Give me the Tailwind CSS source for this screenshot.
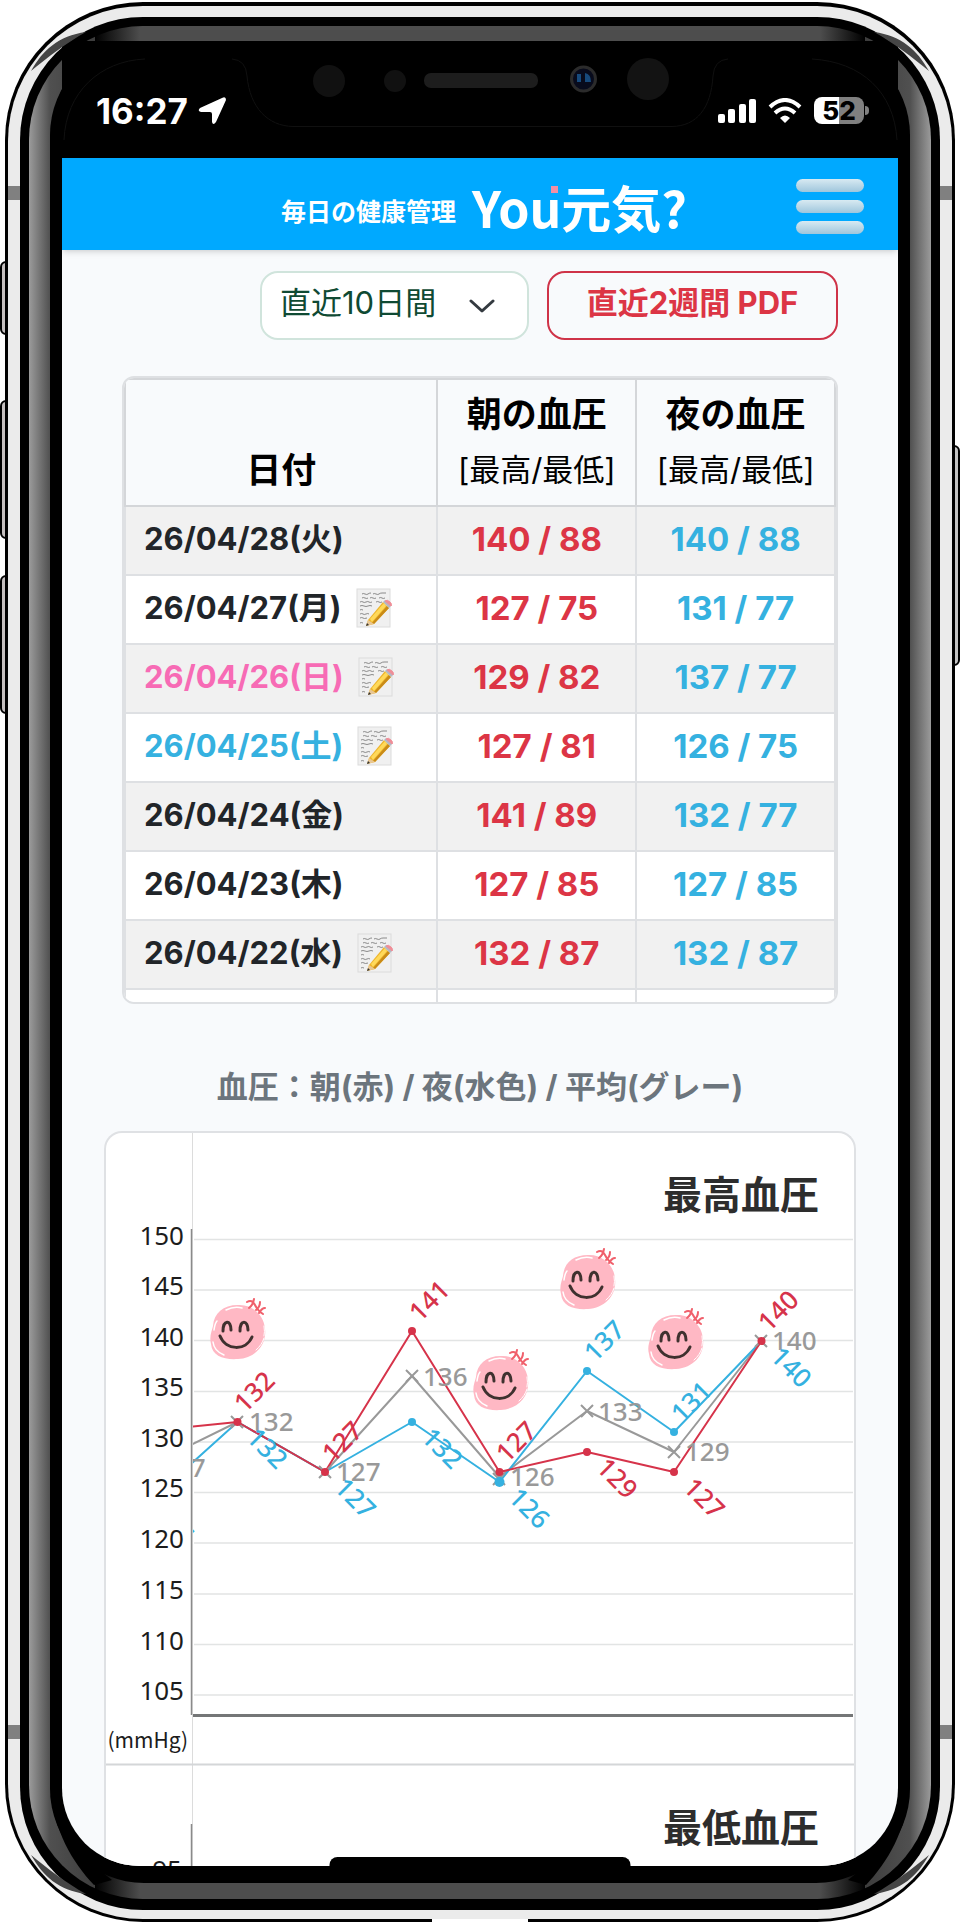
<!DOCTYPE html>
<html lang="ja">
<head>
    <meta charset="UTF-8">
    <meta name="viewport" content="width=device-width, initial-scale=1.0">
    <title>You元気?</title>
    <script src="https://cdn.jsdelivr.net/npm/@tailwindcss/browser@4"></script>
</head>
<body class="bg-white font-['Inter','Noto_Sans_CJK_JP',sans-serif]">
    <!-- Shared shapes -->
    <svg class="hidden">
        <symbol id="corner" viewBox="0 0 150 150">
            <path d="M31 71C43 50 58 36 86 32C66 43 47 58 31 71z" fill="#454545"/>
            <path d="M50 136C54 96 72 64 94 41L112 46L97 58C72 76 54 104 50 136z" fill="#000"/>
        </symbol>
        <symbol id="memo" viewBox="0 0 36 40">
            <rect x="1" y="1" width="33" height="38" fill="#f0f0f0" stroke="#dcdcdc"/>
            <g fill="none" stroke="#8a8a8a" stroke-width="1">
                <path d="M6 6q1-1 3 0t3 0t3-1M17 6q1-1 3 0t3 0t3-1t4 0"/>
                <path d="M6 10q1-1 3 0t3 0M14 10q1-1 3 0t3 0M23 10q2-1 3 0t3 0"/>
                <path d="M4 14q2-1 3 0t3 0t3 0t3 0M20 14q2-1 3 0t3 0"/>
                <path d="M4 18q2-1 4 0t4 0t4 0"/>
                <path d="M4 22q1-1 3 0M4 26q2-1 3 0t3 0t3 0M4 30q2-1 3 0t4 0M4 35q1-1 3 0"/>
            </g>
            <path d="M12 32L27 14L33 20L18 36L10 38z" fill="#eeb52c"/>
            <path d="M14 31L28 15L30 18L16 34z" fill="#ffd95a"/>
            <path d="M18 36L33 20L31 18L16 35z" fill="#c98b17"/>
            <path d="M12 32L18 36L10 38z" fill="#e8c795"/>
            <path d="M11 35L13 37L10 38z" fill="#333"/>
            <path d="M27 14L29 12L35 18L33 20z" fill="#b4b9c4"/>
            <path d="M29 13q2-2 5 1t1 4z" fill="#ef8e98" stroke="#ef8e98"/>
        </symbol>
        <symbol id="face" viewBox="0 0 60 66">
            <path d="M29 9C42 8 55 18 56 33C58 49 46 62 29 63C15 64 3 60 2 48C0 40 3 35 4 30C5 17 14 9 29 9z" fill="#ffb8c4"/>
            <g fill="none" stroke="#fff" stroke-linecap="round">
                <path d="M17 14q8-4 16-2M5 34q1-7 3-9M4 46q1 9 11 13" stroke-width="1.500"/>
                <path d="M55 42q-2 7-8 12M55 30q1 6 0 10" stroke-width="1"/>
            </g>
            <g fill="none" stroke="#3f312f" stroke-linecap="round">
                <path d="M14 35C14 24 22 23 22 34M31 35C31 23 39 24 39 34" stroke-width="3"/>
                <path d="M11 40C17 55 37 55 43 41" stroke-width="3"/>
            </g>
            <path d="M38 6q5-3 8 3t8 9M45 3q-1 6-5 9M51 6q0 5-4 8M56 12q-3 0-6 5" fill="none" stroke="#f0606c" stroke-width="2" stroke-linecap="round"/>
        </symbol>
        <symbol id="cross" viewBox="-7 -7 14 14">
            <path d="M-6 -6L6 6M6 -6L-6 6" stroke="#999" stroke-width="2"/>
        </symbol>
    </svg>

    <div class="relative px-[5px] pt-[2px] pb-1">
        <!-- Side buttons -->
        <div class="absolute left-0 top-[261px] h-[74px] w-3 rounded-l-md border-2 border-black bg-[#c4bfbf]"></div>
        <div class="absolute left-0 top-[400px] h-[139px] w-3 rounded-l-md border-2 border-black bg-[#c4bfbf]"></div>
        <div class="absolute left-0 top-[575px] h-[139px] w-3 rounded-l-md border-2 border-black bg-[#c4bfbf]"></div>
        <div class="absolute right-0 top-[445px] h-[221px] w-3 rounded-r-md border-2 border-black bg-[#c4c4c4]"></div>

        <!-- Phone body, ring by ring -->
        <div class="relative rounded-[138px] bg-black px-[3px] pt-1 pb-[3px]">
            <div class="rounded-[135px] bg-[#ebebeb] px-3 pt-[11px] pb-[9px]">
                <div class="rounded-[123px] bg-black px-[9px] pt-[9px] pb-[11px]">
                    <div class="rounded-[114px] bg-[linear-gradient(90deg,#9b9b9b_0,#505050_21px,#3d3d3d_66px,#000_66px,#4d4d4d_111px,#4d4d4d_calc(100%-111px),#000_calc(100%-66px),#3d3d3d_calc(100%-66px),#505050_calc(100%-21px),#9b9b9b_100%)] px-[21px] pt-[15px] pb-4">
                        <div class="rounded-[94px] bg-black px-3 pb-[17px]">
                            <div class="relative overflow-hidden rounded-b-[78px] bg-[#f8fafc]">

                                <!-- Status bar -->
                                <div class="relative flex h-[117px] items-center justify-between bg-black pt-[22px] pr-[29px] pl-[34px] text-white">
                                    <svg class="absolute top-0 left-1/2 -translate-x-1/2" width="836" height="117" viewBox="62 41 836 117">
                                        <path d="M64 140C66 92 100 61 145 59M232 59Q246 60 247 76C250 108 268 126 293 126.500H672C697 126 711 108 713 76Q714 60 728 59M812 59C862 62 894 92 897 140" fill="none" stroke="#101010"/>
                                        <circle cx="329" cy="81" r="16" fill="#111"/>
                                        <circle cx="395" cy="81" r="11" fill="#111"/>
                                        <rect x="424" y="73" width="114" height="15" rx="7" fill="#1d1d1d"/>
                                        <circle cx="583.500" cy="79" r="12" fill="#080b1c" stroke="#2b2b2b" stroke-width="3"/>
                                        <path d="M577 74h4v8h-4zM585 73q6 1 6 9h-6z" fill="#174a7c"/>
                                        <circle cx="648" cy="79" r="21" fill="#131313"/>
                                    </svg>
                                    <div class="relative flex items-center gap-[10px]">
                                        <span class="text-[35px] leading-8 font-bold">16:27</span>
                                        <svg width="28" height="28" viewBox="0 0 28 28" fill="#fff"><path d="M24 1Q28 -1 28 3L18 25Q15 29 14 25V17Q14 15 12 15H3Q-1 14 2 11z"/></svg>
                                    </div>
                                    <div class="relative flex items-center gap-3">
                                        <svg width="38" height="24" viewBox="0 0 38 24" fill="#fff">
                                            <rect y="15" width="7" height="9" rx="2"/><rect x="10" y="10" width="7" height="14" rx="2"/><rect x="21" y="5" width="7" height="19" rx="2"/><rect x="31" width="7" height="24" rx="2"/>
                                        </svg>
                                        <svg width="34" height="25" viewBox="0 0 34 25" fill="none" stroke="#fff" stroke-width="4">
                                            <path d="M2 9Q17 -5 32 9M7 15Q17 6 27 15"/><path d="M12 20Q17 15 22 20L17 25z" fill="#fff" stroke="none"/>
                                        </svg>
                                        <div class="flex items-center gap-px">
                                            <div class="flex h-[27px] w-[50px] items-center justify-center rounded-lg bg-[linear-gradient(90deg,#fff_50%,#808080_50%)] text-[26px] leading-none font-extrabold text-black">52</div>
                                            <div class="h-[9px] w-1 rounded-r-full bg-[#808080]"></div>
                                        </div>
                                    </div>
                                </div>

                                <!-- App header -->
                                <header class="relative flex h-[92px] items-center justify-center bg-[#00a9ff] font-['Noto_Sans_CJK_JP',sans-serif] font-bold text-white shadow-md">
                                    <a href="#" class="ml-2 flex items-center gap-4">
                                        <span class="pt-3 text-[25px] leading-8">毎日の健康管理</span>
                                        <span class="relative pt-1 text-[50px] leading-[60px]">You元気?<span class="absolute top-[14px] left-[79px] size-[7px] bg-[#f48fa4]"></span></span>
                                    </a>
                                    <button type="button" aria-label="メニュー" class="absolute right-[34px] flex flex-col gap-2 pt-1">
                                        <span class="h-[13px] w-[68px] rounded-full bg-linear-to-b from-[#d8eaf2] to-[#9fc6dc]"></span>
                                        <span class="h-[13px] w-[68px] rounded-full bg-linear-to-b from-[#d8eaf2] to-[#9fc6dc]"></span>
                                        <span class="h-[13px] w-[68px] rounded-full bg-linear-to-b from-[#d8eaf2] to-[#9fc6dc]"></span>
                                    </button>
                                </header>

                                <main>
                                    <div class="flex justify-end gap-[18px] px-[60px] pt-[21px] text-[31px]">
                                        <div class="relative">
                                            <select aria-label="表示期間" class="h-[69px] w-[269px] appearance-none rounded-[18px] border-2 border-[#d0e4dc] bg-white pb-1 pl-[18px] text-[#0f4a33]">
                                                <option>直近10日間</option>
                                            </select>
                                            <svg class="pointer-events-none absolute top-7 right-[34px]" width="26" height="14" viewBox="0 0 26 14" fill="none" stroke="#343a40" stroke-width="3" stroke-linecap="round" stroke-linejoin="round"><path d="M2 2l11 10L24 2"/></svg>
                                        </div>
                                        <button type="button" class="h-[69px] w-[291px] rounded-[18px] border-2 border-[#cf3348] pb-1 font-bold text-[#dc3545]">直近2週間 PDF</button>
                                    </div>

                                    <!-- Records -->
                                    <div class="mx-[60px] mt-9 h-[628px] overflow-hidden rounded-xl border-2 border-[#dee0e3]">
                                        <table class="w-full table-fixed border-collapse">
                                            <thead>
                                                <tr class="h-[127px] align-bottom leading-[54px] text-black *:border-2 *:border-[#d4d6d9] *:pb-2">
                                                    <th class="w-[44%] text-[35px]">日付</th>
                                                    <th class="w-[28%] text-[35px]">朝の血圧<br><span class="text-[31px] font-normal">[最高/最低]</span></th>
                                                    <th class="w-[28%] text-[35px]">夜の血圧<br><span class="text-[31px] font-normal">[最高/最低]</span></th>
                                                </tr>
                                            </thead>
                                            <tbody class="text-center text-[33px] font-bold *:h-[69px] *:odd:bg-[#f1f1f1] *:even:bg-white [&_td]:border-2 [&_td]:border-[#dee0e3] [&_td]:pb-1 [&_td]:leading-10 [&_th]:border-2 [&_th]:border-[#dee0e3] [&_th]:pb-1 [&_th]:pl-[18px] [&_th]:text-left [&_th]:text-[31px] [&_th]:leading-10">
                                                <tr>
                                                    <th scope="row" class="text-[#212529]">26/04/28(火)</th>
                                                    <td class="text-[#dc3545]">140 / 88</td>
                                                    <td class="text-[#35b1e0]">140 / 88</td>
                                                </tr>
                                                <tr>
                                                    <th scope="row" class="text-[#212529]"><div class="flex items-center gap-[14px]">26/04/27(月)<svg width="36" height="40"><use href="#memo"/></svg></div></th>
                                                    <td class="text-[#dc3545]">127 / 75</td>
                                                    <td class="text-[#35b1e0]">131 / 77</td>
                                                </tr>
                                                <tr>
                                                    <th scope="row" class="text-[#f76bb5]"><div class="flex items-center gap-[14px]">26/04/26(日)<svg width="36" height="40"><use href="#memo"/></svg></div></th>
                                                    <td class="text-[#dc3545]">129 / 82</td>
                                                    <td class="text-[#35b1e0]">137 / 77</td>
                                                </tr>
                                                <tr>
                                                    <th scope="row" class="text-[#35b1e0]"><div class="flex items-center gap-[14px]">26/04/25(土)<svg width="36" height="40"><use href="#memo"/></svg></div></th>
                                                    <td class="text-[#dc3545]">127 / 81</td>
                                                    <td class="text-[#35b1e0]">126 / 75</td>
                                                </tr>
                                                <tr>
                                                    <th scope="row" class="text-[#212529]">26/04/24(金)</th>
                                                    <td class="text-[#dc3545]">141 / 89</td>
                                                    <td class="text-[#35b1e0]">132 / 77</td>
                                                </tr>
                                                <tr>
                                                    <th scope="row" class="text-[#212529]">26/04/23(木)</th>
                                                    <td class="text-[#dc3545]">127 / 85</td>
                                                    <td class="text-[#35b1e0]">127 / 85</td>
                                                </tr>
                                                <tr>
                                                    <th scope="row" class="text-[#212529]"><div class="flex items-center gap-[14px]">26/04/22(水)<svg width="36" height="40"><use href="#memo"/></svg></div></th>
                                                    <td class="text-[#dc3545]">132 / 87</td>
                                                    <td class="text-[#35b1e0]">132 / 87</td>
                                                </tr>
                                                <tr><td></td><td></td><td></td></tr>
                                            </tbody>
                                        </table>
                                    </div>

                                    <h2 class="mt-[59px] mb-5 text-center text-[31px] leading-[48px] font-bold text-[#6c757d]">血圧：朝(赤) / 夜(水色) / 平均(グレー)</h2>

                                    <!-- Charts -->
                                    <div class="mx-[42px] overflow-hidden rounded-t-[18px] border-2 border-b-0 border-[#dfe1e4] bg-white">
                                        <svg class="block w-full" viewBox="106 1133 748 733">
                                            <defs><clipPath id="plot"><rect x="193" y="1133" width="661" height="733"/></clipPath></defs>
                                            <path d="M194 1239.500H853M194 1290H853M194 1340.500H853M194 1391.500H853M194 1442H853M194 1492.500H853M194 1543H853M194 1594H853M194 1644.500H853M194 1695H853" stroke="#e2e4e4" stroke-width="1.500"/>
                                            <path d="M192.500 1133V1866" stroke="#dcdcdc"/>
                                            <path d="M106 1764.500H854" stroke="#d4d6d8" stroke-width="2"/>
                                            <path d="M191.500 1229V1715M191.500 1824V1866" stroke="#8a8a8a" stroke-width="1.500"/>
                                            <path d="M193 1715.500H853" stroke="#747677" stroke-width="3"/>

                                            <g class="fill-[#1c1c1c] font-['Noto_Sans',sans-serif] text-[26px]" text-anchor="end">
                                                <text x="184" y="1245">150</text>
                                                <text x="184" y="1295">145</text>
                                                <text x="184" y="1346">140</text>
                                                <text x="184" y="1396">135</text>
                                                <text x="184" y="1447">130</text>
                                                <text x="184" y="1497">125</text>
                                                <text x="184" y="1548">120</text>
                                                <text x="184" y="1599">115</text>
                                                <text x="184" y="1650">110</text>
                                                <text x="184" y="1700">105</text>
                                                <text x="182" y="1879">95</text>
                                                <text x="188" y="1748" class="font-['Noto_Sans_CJK_JP',sans-serif] text-[21px]">(mmHg)</text>
                                            </g>
                                            <g class="fill-[#2d2d2d] font-['Noto_Sans_CJK_JP',sans-serif] text-[39px] font-bold" text-anchor="end">
                                                <text x="819" y="1209">最高血圧</text>
                                                <text x="819" y="1842">最低血圧</text>
                                            </g>

                                            <use href="#face" x="209" y="1296" width="60" height="66"/>
                                            <use href="#face" x="472" y="1347" width="60" height="66"/>
                                            <use href="#face" x="559" y="1246" width="60" height="66"/>
                                            <use href="#face" x="647" y="1306" width="60" height="66"/>

                                            <g clip-path="url(#plot)" class="font-['Noto_Sans',sans-serif] text-[26px] font-medium">
                                                <g fill="none" stroke-width="2" stroke-linejoin="round">
                                                    <path d="M150 1465L237.500 1422L325 1472L412 1376L499.500 1477L587 1411L674 1452L761.500 1341" stroke="#999"/>
                                                    <path d="M150 1501L237.500 1422L325 1472L412 1422L499.500 1482L587 1371L674 1432L761.500 1341" stroke="#35b1e0"/>
                                                    <path d="M150 1431L237.500 1422L325 1472L412 1331L499.500 1472L587 1452L674 1472L761.500 1341" stroke="#d6334a"/>
                                                </g>
                                                <use href="#cross" x="230" y="1415" width="14" height="14"/>
                                                <use href="#cross" x="318" y="1465" width="14" height="14"/>
                                                <use href="#cross" x="405" y="1369" width="14" height="14"/>
                                                <use href="#cross" x="492" y="1472" width="14" height="14"/>
                                                <use href="#cross" x="580" y="1404" width="14" height="14"/>
                                                <use href="#cross" x="667" y="1445" width="14" height="14"/>
                                                <use href="#cross" x="754" y="1334" width="14" height="14"/>
                                                <g fill="#999">
                                                    <text x="161" y="1477">127</text>
                                                    <text x="249" y="1431">132</text>
                                                    <text x="336" y="1481">127</text>
                                                    <text x="423" y="1386">136</text>
                                                    <text x="510" y="1486">126</text>
                                                    <text x="598" y="1421">133</text>
                                                    <text x="685" y="1461">129</text>
                                                    <text x="772" y="1350">140</text>
                                                </g>
                                                <g fill="#35b1e0">
                                                    <circle cx="412" cy="1422" r="4"/><circle cx="499.500" cy="1482" r="5"/><circle cx="587" cy="1371" r="4"/><circle cx="674" cy="1432" r="4"/>
                                                    <text transform="translate(152 1515) rotate(45)">124</text>
                                                    <text transform="translate(245 1439) rotate(45)">132</text>
                                                    <text transform="translate(333 1489) rotate(45)">127</text>
                                                    <text transform="translate(420 1439) rotate(45)">132</text>
                                                    <text transform="translate(507 1499) rotate(45)">126</text>
                                                    <text transform="translate(595 1363) rotate(-45)">137</text>
                                                    <text transform="translate(682 1424) rotate(-45)">131</text>
                                                    <text transform="translate(769 1358) rotate(45)">140</text>
                                                </g>
                                                <g fill="#d6334a">
                                                    <circle cx="237.500" cy="1422" r="4"/><circle cx="325" cy="1472" r="4"/><circle cx="412" cy="1331" r="4"/><circle cx="499.500" cy="1472" r="4"/><circle cx="587" cy="1452" r="4"/><circle cx="674" cy="1472" r="4"/><circle cx="761.500" cy="1341" r="4"/>
                                                    <text transform="translate(245 1414) rotate(-45)">132</text>
                                                    <text transform="translate(333 1464) rotate(-45)">127</text>
                                                    <text transform="translate(420 1323) rotate(-45)">141</text>
                                                    <text transform="translate(507 1464) rotate(-45)">127</text>
                                                    <text transform="translate(595 1469) rotate(45)">129</text>
                                                    <text transform="translate(682 1489) rotate(45)">127</text>
                                                    <text transform="translate(769 1333) rotate(-45)">140</text>
                                                </g>
                                            </g>
                                        </svg>
                                    </div>
                                </main>

                                <!-- Home indicator -->
                                <div class="absolute bottom-0 left-1/2 h-[9px] w-[301px] -translate-x-1/2 rounded-t-lg bg-black"></div>
                            </div>
                        </div>
                    </div>
                </div>
            </div>
            <!-- Charging port gap -->
            <div class="absolute bottom-0 left-1/2 h-[3px] w-24 -translate-x-1/2 bg-white"></div>
        </div>

        <!-- Antenna bands -->
        <div class="absolute top-[186px] left-2 h-[14px] w-3 bg-[#808080]"></div>
        <div class="absolute top-[186px] right-2 h-[14px] w-3 bg-[#808080]"></div>
        <div class="absolute bottom-[187px] left-2 h-[14px] w-3 bg-[#808080]"></div>
        <div class="absolute right-2 bottom-[187px] h-[14px] w-3 bg-[#808080]"></div>

        <!-- Corner reflections -->
        <svg class="absolute top-0 left-0 size-[150px]"><use href="#corner"/></svg>
        <svg class="absolute top-0 right-0 size-[150px] -scale-x-100"><use href="#corner"/></svg>
        <svg class="absolute bottom-0 left-0 size-[150px] -scale-y-100"><use href="#corner"/></svg>
        <svg class="absolute right-0 bottom-0 size-[150px] -scale-100"><use href="#corner"/></svg>
    </div>
</body>
</html>
